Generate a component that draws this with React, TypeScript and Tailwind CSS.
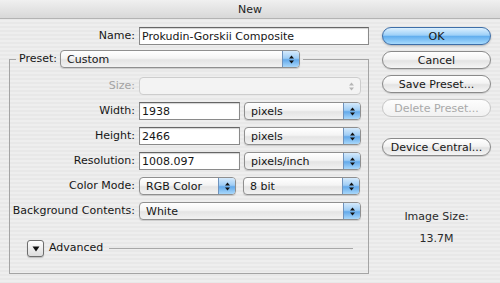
import React from "react";

// Mac OS X (Aqua) style "New" document dialog

function Stepper({ disabled }: { disabled?: boolean }) {
  return (
    <svg width="7" height="11" viewBox="0 0 7 11" className="block">
      <path d="M1 4.5 L3.5 1.5 L6 4.5 Z" fill={disabled ? "#b5b5b5" : "#111"} />
      <path d="M1 6.5 L3.5 9.5 L6 6.5 Z" fill={disabled ? "#b5b5b5" : "#111"} />
    </svg>
  );
}

function Popup({ value, width, disabled }: { value?: string; width: string; disabled?: boolean }) {
  return (
    <div
      className={
        width +
        " relative flex h-[18px] shrink-0 items-center overflow-hidden rounded-[4px] border " +
        (disabled
          ? "border-[#cdcdcd] bg-[#f3f3f3]"
          : "border-[#8f8f8f] bg-[linear-gradient(to_bottom,#ffffff_0%,#f4f4f4_45%,#e4e4e4_55%,#f2f2f2_100%)] shadow-[0_1px_1px_rgba(0,0,0,0.15)]")
      }
    >
      <span className="flex-1 truncate pl-[6px] leading-none">{value}</span>
      <div
        className={
          "flex h-full w-[17px] items-center justify-center " +
          (disabled
            ? "bg-transparent"
            : "border-l border-[#6f93bd] bg-[linear-gradient(to_bottom,#d5eafc_0%,#9fcdf5_45%,#63a9ea_55%,#a9d8fb_100%)]")
        }
      >
        <Stepper disabled={disabled} />
      </div>
    </div>
  );
}

function Field({ value, width }: { value: string; width: string }) {
  return (
    <div
      className={
        width +
        " flex h-[18px] shrink-0 items-center border border-[#8a8a8a] border-t-[#666] bg-white pl-[2px] shadow-[inset_0_1px_1px_rgba(0,0,0,0.18)]"
      }
    >
      <span className="leading-none">{value}</span>
    </div>
  );
}

function PushButton({ label, primary, disabled }: { label: string; primary?: boolean; disabled?: boolean }) {
  return (
    <div
      className={
        "flex h-[18px] w-[109px] items-center justify-center rounded-full border leading-none " +
        (primary
          ? "border-[#3d6ea8] bg-[linear-gradient(to_bottom,#dcf0fe_0%,#9dd0f8_45%,#62aeee_52%,#a6dafd_100%)] shadow-[0_1px_2px_rgba(0,0,0,0.25)]"
          : disabled
          ? "border-[#c6c6c6] bg-[linear-gradient(to_bottom,#fdfdfd_0%,#f1f1f1_100%)] text-[#a9a9a9]"
          : "border-[#8a8a8a] bg-[linear-gradient(to_bottom,#ffffff_0%,#f3f3f3_45%,#e3e3e3_55%,#f5f5f5_100%)] shadow-[0_1px_1px_rgba(0,0,0,0.15)]")
      }
    >
      {label}
    </div>
  );
}

function Row({ label, dim, children }: { label: string; dim?: boolean; children: React.ReactNode }) {
  return (
    <div className="flex h-[18px] items-center">
      <span className={"w-[125px] shrink-0 text-right " + (dim ? "text-[#a3a3a3]" : "")}>{label}</span>
      <div className="ml-[4px] flex gap-[4px]">{children}</div>
    </div>
  );
}

export default function App() {
  return (
    <div className="flex h-[283px] w-[500px] flex-col overflow-hidden bg-[repeating-linear-gradient(to_bottom,#eeeeee_0px,#eeeeee_2px,#e8e8e8_2px,#e8e8e8_4px)] font-['DejaVu_Sans',sans-serif] text-[11px] text-[#161616]">
      {/* Title bar */}
      <div className="flex h-[19px] shrink-0 items-center justify-center border-b border-[#b3b3b3] bg-[linear-gradient(to_bottom,#f0f0f0,#d8d8d8)] leading-none text-[#222]">
        New
      </div>

      <div className="flex flex-1">
        {/* Left side */}
        <div className="w-[369px] shrink-0 pl-[9px]">
          <div className="mt-[8px] flex h-[18px] items-center">
            <span className="w-[126px] shrink-0 text-right">Name:</span>
            <Field value="Prokudin-Gorskii Composite" width="ml-[4px] w-[230px]" />
          </div>

          <fieldset className="mt-[5px] w-[360px] border border-[#a4a4a4] pb-[16px]">
            <legend className="ml-[6px] flex items-center gap-[3px] px-[3px]">
              <span>Preset:</span>
              <Popup value="Custom" width="w-[240px]" />
            </legend>

            <div className="mt-[9px] flex flex-col gap-[7px]">
              <Row label="Size:" dim>
                <Popup width="w-[222px]" disabled />
              </Row>
              <Row label="Width:">
                <Field value="1938" width="w-[101px]" />
                <Popup value="pixels" width="w-[117px]" />
              </Row>
              <Row label="Height:">
                <Field value="2466" width="w-[101px]" />
                <Popup value="pixels" width="w-[117px]" />
              </Row>
              <Row label="Resolution:">
                <Field value="1008.097" width="w-[101px]" />
                <Popup value="pixels/inch" width="w-[117px]" />
              </Row>
              <Row label="Color Mode:">
                <Popup value="RGB Color" width="w-[97px]" />
                <Popup value="8 bit" width="ml-[3px] w-[117px]" />
              </Row>
              <Row label="Background Contents:">
                <Popup value="White" width="w-[222px]" />
              </Row>
            </div>

            <div className="mt-[20px] flex items-center pl-[17px] pr-[15px]">
              <div className="flex h-[17px] w-[17px] items-center justify-center rounded-[3px] border border-[#6e6e6e] bg-[linear-gradient(to_bottom,#ffffff,#dcdcdc)] shadow-[0_1px_1px_rgba(0,0,0,0.2)]">
                <svg width="8" height="6" viewBox="0 0 8 6">
                  <path d="M0.5 0.5 L7.5 0.5 L4 5.5 Z" fill="#111" />
                </svg>
              </div>
              <span className="ml-[5px]">Advanced</span>
              <div className="ml-[6px] h-px flex-1 bg-[#a8a8a8]" />
            </div>
          </fieldset>
        </div>

        {/* Right side */}
        <div className="ml-[13px] flex w-[109px] flex-col pt-[8px]">
          <div className="flex flex-col gap-[6px]">
            <PushButton label="OK" primary />
            <PushButton label="Cancel" />
            <PushButton label="Save Preset..." />
            <PushButton label="Delete Preset..." disabled />
          </div>
          <div className="mt-[21px]">
            <PushButton label="Device Central..." />
          </div>
          <div className="mt-[54px] flex flex-col items-center leading-[14px] text-[#2a2a2a]">
            <span>Image Size:</span>
            <span className="mt-[8px]">13.7M</span>
          </div>
        </div>
      </div>
    </div>
  );
}
